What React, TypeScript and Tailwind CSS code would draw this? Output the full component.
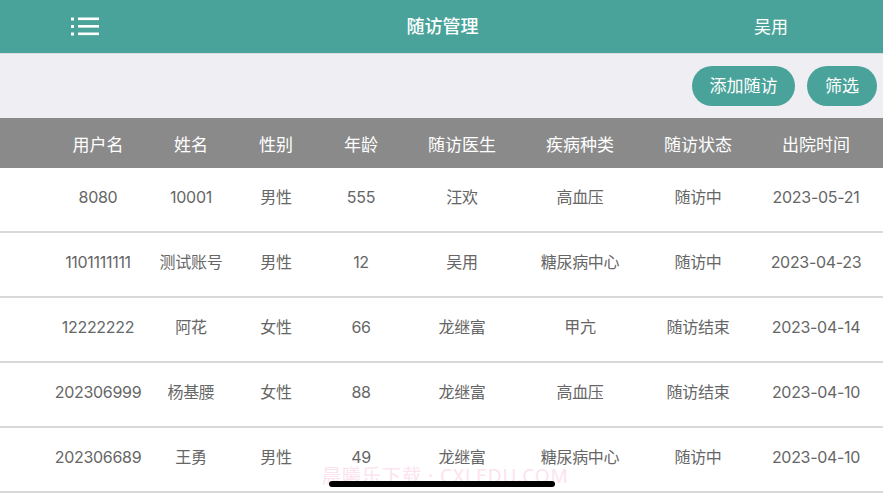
const columns = ["用户名", "姓名", "性别", "年龄", "随访医生", "疾病种类", "随访状态", "出院时间"]

const rows = [
  ["8080", "10001", "男性", "555", "汪欢", "高血压", "随访中", "2023-05-21"],
  ["1101111111", "测试账号", "男性", "12", "吴用", "糖尿病中心", "随访中", "2023-04-23"],
  ["12222222", "阿花", "女性", "66", "龙继富", "甲亢", "随访结束", "2023-04-14"],
  ["202306999", "杨基腰", "女性", "88", "龙继富", "高血压", "随访结束", "2023-04-10"],
  ["202306689", "王勇", "男性", "49", "龙继富", "糖尿病中心", "随访中", "2023-04-10"],
]

const gridCols = "grid grid-cols-[96px_90px_80px_90px_112px_124px_112px_124px] pl-[50px]"

function MenuIcon() {
  return (
    <svg width="30" height="20" viewBox="0 0 30 20" fill="white">
      <rect x="0" y="0.5" width="3" height="3" />
      <rect x="0" y="8" width="3" height="3" />
      <rect x="0" y="15.5" width="3" height="3" />
      <rect x="7" y="0.5" width="21" height="2.6" />
      <rect x="7" y="8" width="21" height="2.6" />
      <rect x="7" y="15.5" width="21" height="2.6" />
    </svg>
  )
}

export default function App() {
  return (
    <main className="relative h-[497px] w-[883px] overflow-hidden bg-white font-['Noto_Sans','Noto_Sans_CJK_SC',sans-serif]">
      <header className="grid h-[53px] grid-cols-[1fr_auto_1fr] items-center bg-[#4aa39a] text-white">
        <div className="pl-[71px] pt-[1px]">
          <MenuIcon />
        </div>
        <h1 className="pl-[2px] text-[18px] font-medium">随访管理</h1>
        <div className="pr-[95px] text-right text-[17px]">吴用</div>
      </header>

      <div className="flex h-[65px] items-center justify-end gap-[12px] border-t border-[#d9dbe0] bg-[#efeef3] pr-[6px]">
        <button type="button" className="h-[40px] w-[103px] rounded-full bg-[#4aa39a] text-[17px] text-white">
          添加随访
        </button>
        <button type="button" className="h-[40px] w-[70px] rounded-full bg-[#4aa39a] text-[17px] text-white">
          筛选
        </button>
      </div>

      <div className={`${gridCols} h-[50px] items-center bg-[#8a8a8a] pt-[4px] text-[17px] text-white`}>
        {columns.map((col) => (
          <div key={col} className="text-center">
            {col}
          </div>
        ))}
      </div>

      {rows.map((row, i) => (
        <div
          key={i}
          className={`${gridCols} h-[65px] items-center border-b-2 border-[#d9d9d9] pb-[5px] font-['Inter','Noto_Sans_CJK_SC',sans-serif] text-[16px] text-[#666666]`}
        >
          {row.map((cell, j) => (
            <div key={j} className="text-center tracking-[-0.3px]">
              {cell}
            </div>
          ))}
        </div>
      ))}

      <div className="absolute left-[322px] top-[462px] text-[19px] tracking-[1px] text-[#fbe3ef]">
        晨曦乐下载 · CXLEDU.COM
      </div>
      <div className="absolute left-[329px] top-[481px] h-[6px] w-[226px] rounded-full bg-black" />
    </main>
  )
}
